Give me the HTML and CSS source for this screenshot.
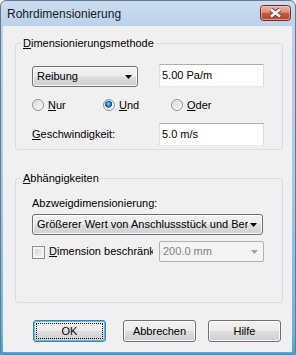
FILE: index.html
```html
<!DOCTYPE html>
<html lang="de">
<head>
<meta charset="utf-8">
<title>Rohrdimensionierung</title>
<link rel="stylesheet" href="styles.css">
</head>
<body>
<div class="window">
  <div class="titlebar">
    <span class="title">Rohrdimensionierung</span>
    <svg class="close" width="31" height="16" viewBox="0 0 31 16">
      <defs>
        <linearGradient id="cg" x1="0" y1="0" x2="0" y2="1">
          <stop offset="0" stop-color="#ebb7aa"/>
          <stop offset="0.45" stop-color="#d98f7e"/>
          <stop offset="0.5" stop-color="#c95b42"/>
          <stop offset="0.85" stop-color="#c0432a"/>
          <stop offset="1" stop-color="#d3694e"/>
        </linearGradient>
      </defs>
      <rect x="0.5" y="0.5" width="30" height="15" rx="3" fill="url(#cg)" stroke="#6b2c21"/>
      <rect x="1.5" y="1.5" width="28" height="13" rx="2" fill="none" stroke="#f6d2c8" stroke-opacity="0.55"/>
      <path d="M11 4.5L20 11.5M20 4.5L11 11.5" stroke="#6a463f" stroke-width="4.2"/>
      <path d="M11 4.5L20 11.5M20 4.5L11 11.5" stroke="#ffffff" stroke-width="2.4"/>
    </svg>
  </div>
  <div class="client">
    <fieldset class="group group-method">
      <legend><u>D</u>imensionierungsmethode</legend>
      <div class="group-body method-body">
        <div class="pair pair-end">
          <div class="combo combo-short">
            <span class="combo-text">Reibung</span>
            <svg class="arrow" width="7" height="4" viewBox="0 0 7 4"><path d="M0 0H7L3.5 4Z"/></svg>
          </div>
          <div class="edit">5.00 Pa/m</div>
        </div>
        <div class="radios">
          <div class="radio-item item-nur"><span class="radio"></span><span><u>N</u>ur</span></div>
          <div class="radio-item item-und"><span class="radio on"></span><span><u>U</u>nd</span></div>
          <div class="radio-item"><span class="radio"></span><span><u>O</u>der</span></div>
        </div>
        <div class="pair pair-center">
          <span class="label"><u>G</u>eschwindigkeit:</span>
          <div class="edit">5.0 m/s</div>
        </div>
      </div>
    </fieldset>
    <fieldset class="group group-dep">
      <legend><u>A</u>bhängigkeiten</legend>
      <div class="group-body dep-body">
        <span class="label">Abzweigdimensionierung:</span>
        <div class="combo combo-long">
          <span class="combo-text">Größerer Wert von Anschlussstück und Bereich</span>
          <svg class="arrow" width="7" height="4" viewBox="0 0 7 4"><path d="M0 0H7L3.5 4Z"/></svg>
        </div>
        <div class="check-row">
          <span class="checkbox"></span>
          <span class="check-label"><u>D</u>imension beschränken</span>
          <div class="combo combo-disabled">
            <span class="combo-text">200.0 mm</span>
            <svg class="arrow" width="7" height="4" viewBox="0 0 7 4"><path d="M0 0H7L3.5 4Z"/></svg>
          </div>
        </div>
      </div>
    </fieldset>
    <div class="buttons">
      <button class="btn btn-default btn-ok">OK</button>
      <button class="btn btn-cancel">Abbrechen</button>
      <button class="btn btn-help">Hilfe</button>
    </div>
  </div>
</div>
</body>
</html>
```

FILE: styles.css
```css
html, body {
  margin: 0;
  padding: 0;
}

body {
  width: 296px;
  height: 355px;
  overflow: hidden;
  background: #ffffff;
  font-family: "Liberation Sans", Arial, sans-serif;
  font-size: 11px;
  color: #000000;
}

.window {
  box-sizing: border-box;
  width: 296px;
  height: 355px;
  border: 1px solid #67798c;
  border-radius: 6px 6px 0 0;
  background: linear-gradient(to bottom, #cadcf0 0px, #bbd2eb 25px, #a9c8e7 180px, #6bb6e3 330px, #38aae0 354px);
  display: flex;
  flex-direction: column;
}

.titlebar {
  height: 25px;
  flex: none;
  display: flex;
  align-items: flex-start;
  padding-left: 6px;
}

.title {
  margin-top: 6px;
  font-size: 12px;
  line-height: 15px;
  color: #1a1a1a;
}

.close {
  display: block;
  margin-left: auto;
  margin-top: 4px;
  margin-right: 4px;
}

.client {
  flex: 1;
  margin: 0 3px 2px 2px;
  background: #f0f0f0;
  padding: 11px 0 0 12px;
  display: flex;
  flex-direction: column;
  align-items: flex-start;
}

u {
  text-decoration: underline;
  text-underline-offset: 1px;
}

.group {
  box-sizing: border-box;
  width: 268px;
  margin: 0;
  padding: 0;
  border: 1px solid #d5dfe5;
  border-radius: 3px;
  min-inline-size: 0;
}

.group legend {
  margin-left: 5px;
  padding: 0 2px;
  line-height: 13px;
  font-size: 11px;
}

.group-body {
  padding-left: 16px;
}

.method-body {
  padding-top: 14px;
  padding-bottom: 3px;
}

.group-dep {
  margin-top: 22px;
}

.dep-body {
  padding-top: 12px;
  padding-bottom: 40px;
  display: flex;
  flex-direction: column;
  align-items: flex-start;
}

.pair {
  display: grid;
  grid-template-columns: 106px 105px;
  column-gap: 21px;
}

.pair-end {
  align-items: end;
}

.pair-center {
  align-items: center;
  margin-top: 12px;
}

.label {
  line-height: 13px;
  white-space: nowrap;
}

.edit {
  box-sizing: border-box;
  height: 23px;
  background: #ffffff;
  border: 1px solid #dbdfe6;
  border-top-color: #abadb3;
  border-bottom-color: #e3e9ef;
  padding-left: 2px;
  line-height: 21px;
  white-space: nowrap;
}

.combo {
  box-sizing: border-box;
  height: 21px;
  border: 1px solid #707070;
  border-radius: 3px;
  background: linear-gradient(to bottom, #f2f2f2 0%, #ebebeb 48%, #dddddd 52%, #cfcfcf 100%);
  box-shadow: inset 0 0 0 1px rgba(255, 255, 255, 0.8);
  display: flex;
  align-items: center;
  padding-left: 4px;
}

.combo-text {
  flex: 1;
  min-width: 0;
  overflow: hidden;
  white-space: nowrap;
  line-height: 13px;
}

.arrow {
  display: block;
  flex: none;
  margin-left: 2px;
  margin-right: 5px;
  fill: #000000;
}

.combo-short {
  width: 106px;
}

.combo-long {
  width: 231px;
  margin-top: 4px;
}

.combo-disabled {
  width: 105px;
  margin-left: 6px;
  border-color: #adb2b5;
  background: #f4f4f4;
  box-shadow: none;
  border-radius: 2px;
  color: #838383;
  padding-left: 3px;
}

.combo-disabled .arrow {
  fill: #a3a3a3;
  margin-right: 5px;
}

.radios {
  display: flex;
  margin-top: 12px;
  height: 12px;
}

.radio-item {
  display: flex;
  align-items: center;
  gap: 4px;
  line-height: 13px;
}

.item-nur {
  width: 71px;
}

.item-und {
  width: 68px;
}

.radio {
  box-sizing: border-box;
  width: 12px;
  height: 12px;
  flex: none;
  border-radius: 50%;
  border: 1px solid #8e8f8f;
  background: linear-gradient(135deg, #cfcfcf 0%, #ececec 55%, #fbfbfb 100%);
  box-shadow: inset 0 0 0 1px rgba(255, 255, 255, 0.7);
}

.radio.on {
  background:
    radial-gradient(circle at 45% 40%, #a6e1ff 0, #3a9ae0 1.5px, #0d5a9e 3px, #0d4f8a 3.4px, rgba(13, 79, 138, 0) 3.8px),
    linear-gradient(135deg, #cfcfcf 0%, #ececec 55%, #fbfbfb 100%);
}

.check-row {
  display: flex;
  align-items: center;
  margin-top: 6px;
}

.checkbox {
  box-sizing: border-box;
  width: 13px;
  height: 13px;
  flex: none;
  margin-top: 1px;
  margin-right: 4px;
  border: 1px solid #8e8f8f;
  background: linear-gradient(135deg, #c8ccd2 0%, #e4e6e9 50%, #f8f8f8 100%);
  box-shadow: inset 0 0 0 2px #f4f4f4;
}

.check-label {
  width: 104px;
  overflow: hidden;
  white-space: nowrap;
  line-height: 13px;
}

.buttons {
  display: flex;
  margin-top: 17px;
  padding-left: 18px;
}

.btn {
  box-sizing: border-box;
  width: 73px;
  height: 22px;
  padding: 0;
  margin: 0;
  border: 1px solid #707070;
  border-radius: 3px;
  background: linear-gradient(to bottom, #f2f2f2 0%, #ebebeb 48%, #dddddd 52%, #cfcfcf 100%);
  box-shadow: inset 0 0 0 1px rgba(252, 252, 252, 0.9);
  font-family: "Liberation Sans", Arial, sans-serif;
  font-size: 11px;
  color: #000000;
  line-height: 20px;
}

.btn-default {
  border-color: #3c7fb1;
  box-shadow: inset 0 0 0 1px #4ec3ef;
  outline: 1px dotted #000000;
  outline-offset: -4px;
}

.btn-cancel {
  margin-left: 17px;
}

.btn-help {
  margin-left: 12px;
}
```
